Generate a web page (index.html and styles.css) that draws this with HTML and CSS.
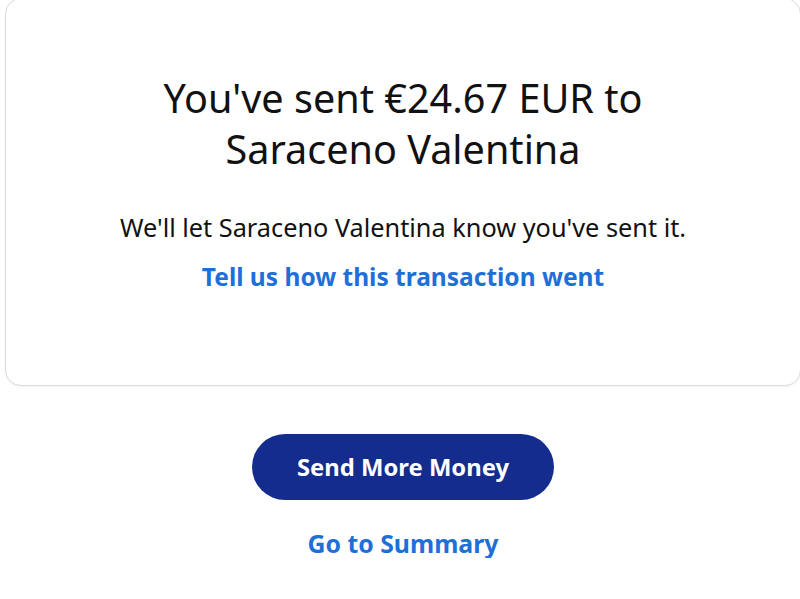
FILE: index.html
```html
<!DOCTYPE html>
<html lang="en">
<head>
<meta charset="utf-8">
<title>Sent</title>
<link rel="stylesheet" href="styles.css">
</head>
<body>
<main class="page">
  <section class="card">
    <h1 class="title">You've sent €24.67 EUR to<br>Saraceno Valentina</h1>
    <p class="note">We'll let Saraceno Valentina know you've sent it.</p>
    <a class="feedback" href="#">Tell us how this transaction went</a>
  </section>
  <div class="actions">
    <a class="btn-primary" href="#">Send More Money</a>
    <a class="summary" href="#">Go to Summary</a>
  </div>
</main>
</body>
</html>
```
FILE: styles.css
```css
html, body {
  margin: 0;
  padding: 0;
  background: #ffffff;
}
body {
  font-family: "Noto Sans", "Open Sans", sans-serif;
  color: #111111;
  width: 800px;
  overflow: hidden;
}
.page {
  display: flex;
  flex-direction: column;
}
.card {
  margin: -2px 0 0 5px;
  width: 796px;
  height: 388px;
  box-sizing: border-box;
  border: 1px solid #dcdcdc;
  border-radius: 16px;
  box-shadow: 0 1px 2px rgba(0,0,0,0.06);
  display: flex;
  flex-direction: column;
  align-items: center;
  padding-top: 74px;
}
.title {
  margin: 0;
  font-size: 39.6px;
  font-weight: 400;
  line-height: 51px;
  text-align: center;
  letter-spacing: 0;
}
.note {
  margin: 37px 0 0;
  font-size: 25.3px;
  line-height: 30px;
  text-align: center;
}
.feedback {
  margin-top: 20px;
  font-size: 24.5px;
  line-height: 30px;
  font-weight: 700;
  color: #1f6fd8;
  text-decoration: none;
}
.actions {
  display: flex;
  flex-direction: column;
  align-items: center;
  margin: 48px 0 0 5px;
  width: 796px;
}
.btn-primary {
  width: 302px;
  height: 66px;
  border-radius: 33px;
  background: #142c8e;
  color: #ffffff;
  font-size: 23.8px;
  font-weight: 700;
  display: flex;
  align-items: center;
  justify-content: center;
  text-decoration: none;
}
.summary {
  margin-top: 28px;
  font-size: 24.8px;
  font-weight: 700;
  line-height: 30px;
  color: #1f6fd8;
  text-decoration: none;
}
```
